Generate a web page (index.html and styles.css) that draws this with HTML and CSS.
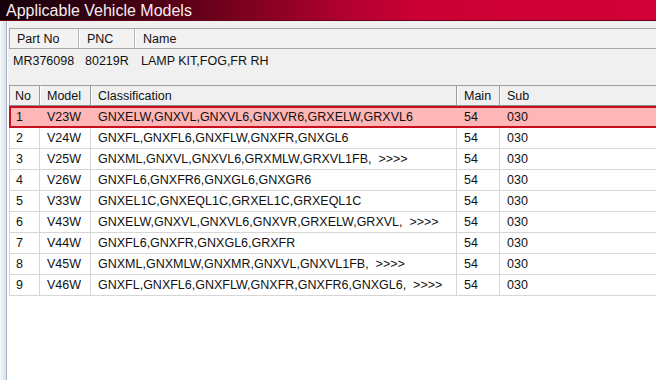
FILE: index.html
```html
<!DOCTYPE html>
<html>
<head>
<meta charset="utf-8">
<link rel="stylesheet" href="styles.css">
</head>
<body>
<div class="window">
  <div class="titlebar">Applicable Vehicle Models</div>
  <div class="main">
    <div class="frame-left"></div>
    <div class="content">
      <div class="part-panel">
        <div class="part-grid part-head">
          <div class="ph">Part No</div>
          <div class="ph">PNC</div>
          <div class="ph last">Name</div>
        </div>
        <div class="part-grid part-row">
          <div class="pc pc-no">MR376098</div>
          <div class="pc">80219R</div>
          <div class="pc">LAMP KIT,FOG,FR RH</div>
        </div>
      </div>
      <div class="list">
        <div class="lrow lhead">
          <div class="hc">No</div>
          <div class="hc">Model</div>
          <div class="hc">Classification</div>
          <div class="hc">Main</div>
          <div class="hc last">Sub</div>
        </div>
        <div class="lrow item selected">
          <div class="c">1</div><div class="c">V23W</div><div class="c">GNXELW,GNXVL,GNXVL6,GNXVR6,GRXELW,GRXVL6</div><div class="c">54</div><div class="c">030</div>
        </div>
        <div class="lrow item">
          <div class="c">2</div><div class="c">V24W</div><div class="c">GNXFL,GNXFL6,GNXFLW,GNXFR,GNXGL6</div><div class="c">54</div><div class="c">030</div>
        </div>
        <div class="lrow item">
          <div class="c">3</div><div class="c">V25W</div><div class="c">GNXML,GNXVL,GNXVL6,GRXMLW,GRXVL1FB,&nbsp;&nbsp;&gt;&gt;&gt;&gt;</div><div class="c">54</div><div class="c">030</div>
        </div>
        <div class="lrow item">
          <div class="c">4</div><div class="c">V26W</div><div class="c">GNXFL6,GNXFR6,GNXGL6,GNXGR6</div><div class="c">54</div><div class="c">030</div>
        </div>
        <div class="lrow item">
          <div class="c">5</div><div class="c">V33W</div><div class="c">GNXEL1C,GNXEQL1C,GRXEL1C,GRXEQL1C</div><div class="c">54</div><div class="c">030</div>
        </div>
        <div class="lrow item">
          <div class="c">6</div><div class="c">V43W</div><div class="c">GNXELW,GNXVL,GNXVL6,GNXVR,GRXELW,GRXVL,&nbsp;&nbsp;&gt;&gt;&gt;&gt;</div><div class="c">54</div><div class="c">030</div>
        </div>
        <div class="lrow item">
          <div class="c">7</div><div class="c">V44W</div><div class="c">GNXFL6,GNXFR,GNXGL6,GRXFR</div><div class="c">54</div><div class="c">030</div>
        </div>
        <div class="lrow item">
          <div class="c">8</div><div class="c">V45W</div><div class="c">GNXML,GNXMLW,GNXMR,GNXVL,GNXVL1FB,&nbsp;&nbsp;&gt;&gt;&gt;&gt;</div><div class="c">54</div><div class="c">030</div>
        </div>
        <div class="lrow item">
          <div class="c">9</div><div class="c">V46W</div><div class="c">GNXFL,GNXFL6,GNXFLW,GNXFR,GNXFR6,GNXGL6,&nbsp;&nbsp;&gt;&gt;&gt;&gt;</div><div class="c">54</div><div class="c">030</div>
        </div>
      </div>
    </div>
  </div>
</div>
</body>
</html>
```
FILE: styles.css
```css
html, body {
  margin: 0;
  padding: 0;
  background: #ffffff;
}
body {
  font-family: "Liberation Sans", Arial, sans-serif;
  font-size: 12.5px;
  color: #111;
  width: 656px;
  height: 380px;
  overflow: hidden;
}
.window {
  display: flex;
  flex-direction: column;
  height: 380px;
}
.titlebar {
  height: 20px;
  line-height: 21px;
  font-size: 16px;
  color: #f4eef0;
  padding-left: 6px;
  background: linear-gradient(to right, #16000a 0%, #3a0012 18%, #80001f 38%, #b00030 52%, #cc0034 64%, #d20036 100%);
  border-bottom: 1px solid #6a0018;
}
.main {
  flex: 1;
  display: flex;
}
.frame-left {
  width: 6px;
  background: linear-gradient(to right, #f6f8fa, #d6e0ea);
  border-right: 1px solid #a9b8c8;
}
.content {
  flex: 1;
  display: flex;
  flex-direction: column;
  padding-left: 1px;
}
.part-panel {
  background: #f0f0f0;
  padding-top: 7px;
  height: 57px;
  padding-left: 1px;
}
.part-grid {
  display: grid;
  grid-template-columns: 70px 56px 1fr;
}
.part-head {
  height: 19px;
  border-top: 1px solid #a6a6a6;
  border-bottom: 1px solid #a6a6a6;
  background: #f2f2f2;
}
.ph {
  padding-left: 7px;
  padding-top: 2px;
  line-height: 17px;
  border-right: 1px solid #b4b4b4;
  border-left: 1px solid #ffffff;
}
.ph:first-child {
  border-left: 1px solid #a6a6a6;
}
.ph.last {
  border-right: none;
}
.part-row {
  height: 24px;
}
.pc {
  line-height: 24px;
  padding-left: 6px;
}
.pc-no {
  padding-left: 4px;
}
.list {
  display: flex;
  flex-direction: column;
  margin-left: 1px;
}
.lrow {
  display: grid;
  grid-template-columns: 31px 51px 366px 43px 1fr;
}
.lhead {
  height: 19px;
  background: #f0f0f0;
  border-top: 1px solid #a0a0a0;
  border-bottom: 1px solid #8c8c8c;
}
.hc {
  line-height: 18px;
  padding-top: 1px;
  padding-left: 6px;
  border-right: 1px solid #9c9c9c;
  border-left: 1px solid #ffffff;
}
.hc:first-child {
  padding-left: 5px;
  border-left: 1px solid #a0a0a0;
}
.hc.last {
  border-right: none;
}
.item {
  height: 20px;
  border-bottom: 1px solid #d6d6d6;
  background: #ffffff;
}
.c {
  line-height: 20px;
  padding-left: 7px;
  border-right: 1px solid #d6d6d6;
  white-space: nowrap;
  overflow: hidden;
}
.c:first-child {
  padding-left: 6px;
  border-left: 1px solid #d6d6d6;
}
.c:last-child {
  border-right: none;
}
.item.selected {
  height: 18px;
  background: #ffb6b6;
  border-top: 2px solid #c8101e;
  border-bottom: 2px solid #c8101e;
}
.item.selected .c {
  line-height: 18px;
  border-right-color: transparent;
}
.item.selected .c:first-child {
  border-left: 2px solid #c8101e;
  padding-left: 5px;
}
```
